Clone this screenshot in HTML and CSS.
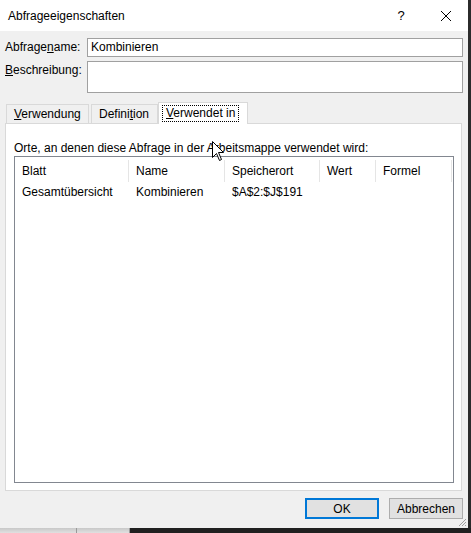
FILE: index.html
```html
<!DOCTYPE html>
<html>
<head>
  <title>Abfrageeigenschaften</title>
  <meta charset="UTF-8">
  <link rel="stylesheet" href="styles.css">
</head>
<body>
  <div class="dialog">
    <div class="titlebar">
      <span class="title">Abfrageeigenschaften</span>
      <span class="title-btn help">?</span>
      <span class="title-btn close">
        <svg width="12" height="12" viewBox="0 0 12 12"><path d="M1 1 L11 11 M11 1 L1 11" stroke="#000" stroke-width="1"/></svg>
      </span>
    </div>

    <div class="body">
      <div class="field-row">
        <label class="field-label">Abfrage<u>n</u>ame:</label>
        <div class="text-input">Kombinieren</div>
      </div>
      <div class="field-row">
        <label class="field-label"><u>B</u>eschreibung:</label>
        <div class="text-input multiline"></div>
      </div>

      <div class="tabs">
        <div class="tab"><u>V</u>erwendung</div>
        <div class="tab">Defini<u>t</u>ion</div>
        <div class="tab active"><span class="focus"><u>V</u>erwendet in</span></div>
      </div>

      <div class="tab-panel">
        <div class="panel-caption">Orte, an denen diese Abfrage in der Arbeitsmappe verwendet wird:</div>
        <div class="listview">
          <div class="lv-row lv-head">
            <div class="col c1">Blatt</div>
            <div class="col c2">Name</div>
            <div class="col c3">Speicherort</div>
            <div class="col c4">Wert</div>
            <div class="col c5">Formel</div>
          </div>
          <div class="lv-row">
            <div class="col c1">Gesamtübersicht</div>
            <div class="col c2">Kombinieren</div>
            <div class="col c3">$A$2:$J$191</div>
            <div class="col c4"></div>
            <div class="col c5"></div>
          </div>
        </div>
      </div>

      <div class="buttons">
        <button class="btn default">OK</button>
        <button class="btn">Abbrechen</button>
      </div>
    </div>

    <!-- size grip -->
    <svg class="grip" width="10" height="10" viewBox="0 0 10 10">
      <path d="M9 2 L2 9 M9 5 L5 9 M9 8 L8 9" stroke="#a0a0a0" stroke-width="1"/>
    </svg>
  </div>

  <div class="taskbar">
    <div class="tb-light"></div>
    <div class="tb-light second"></div>
    <div class="tb-dark"></div>
  </div>

  <!-- mouse pointer -->
  <svg class="cursor" width="13" height="21" viewBox="0 0 13 21">
    <path d="M0.5 0.5 L0.5 16.5 L4.5 12.5 L7.5 19.5 L9.5 18.5 L6.5 11.5 L11.5 11.5 Z" fill="#fff" stroke="#000" stroke-width="1" stroke-linejoin="miter"/>
  </svg>
</body>
</html>
```

FILE: styles.css
```css
:root {
  --face: #f0f0f0;
  --text: #000;
  --panel-border: #d9d9d9;
  --input-border: #a0a0a0;
  --list-border: #828790;
  --accent: #0078d7;
}

* {
  box-sizing: border-box;
  margin: 0;
  padding: 0;
}

body {
  width: 471px;
  height: 533px;
  background-color: #2b2b2b;
  font-family: 'Segoe UI', 'Liberation Sans', Arial, sans-serif;
  font-size: 12px;
  color: var(--text);
  overflow: hidden;
  position: relative;
}

u {
  text-decoration: underline;
  text-underline-offset: 1px;
}

.dialog {
  width: 468px;
  height: 528px;
  background-color: var(--face);
  position: relative;
  display: flex;
  flex-direction: column;
}

.titlebar {
  height: 31px;
  background-color: #fff;
  display: flex;
  align-items: center;
  padding-left: 8px;
}

.title {
  flex: 1;
  font-size: 12px;
}

.title-btn {
  width: 46px;
  height: 31px;
  display: flex;
  align-items: center;
  justify-content: center;
}

.help {
  font-size: 13px;
}

.close {
  width: 44px;
}

.body {
  flex: 1;
  padding: 7px 5px 0 5px;
  display: flex;
  flex-direction: column;
}

.field-row {
  display: flex;
  margin-bottom: 4px;
}

.field-label {
  width: 82px;
  padding-top: 2px;
}

.text-input {
  width: 376px;
  height: 19px;
  background-color: #fff;
  border: 1px solid var(--input-border);
  padding: 1px 3px;
  line-height: 15px;
}

.text-input.multiline {
  height: 32px;
}

.tabs {
  display: flex;
  align-items: flex-end;
  height: 22px;
  margin-top: 4px;
  padding-left: 1px;
}

.tab {
  height: 19px;
  padding: 2px 7px 0 7px;
  border: 1px solid var(--panel-border);
  border-bottom: none;
  margin-right: 2px;
  background-color: var(--face);
}

.tab:first-child {
  width: 83px;
}

.tab:nth-child(2) {
  width: 67px;
}

.tab.active {
  height: 22px;
  width: 90px;
  background-color: #fff;
  margin-left: -2px;
  margin-bottom: -1px;
  padding: 2px 3px 0 3px;
  position: relative;
  z-index: 1;
}

.focus {
  display: inline-block;
  border: 1px dotted #000;
  padding: 0 3px;
  line-height: 15px;
}

.tab-panel {
  width: 457px;
  height: 368px;
  background-color: #fff;
  border: 1px solid var(--panel-border);
  padding: 17px 0 0 8px;
}

.panel-caption {
  height: 15px;
  line-height: 14px;
}

.listview {
  width: 440px;
  height: 327px;
  border: 1px solid var(--list-border);
  background-color: #fff;
}

.lv-row {
  display: flex;
  height: 19px;
  line-height: 19px;
  padding-top: 1px;
}

.lv-head {
  height: 25px;
  line-height: 22px;
  padding-top: 3px;
}

.col {
  padding-left: 7px;
  white-space: nowrap;
}

.lv-head .col {
  border-right: 1px solid #e5e5e5;
}

.c1 { width: 114px; }
.c2 { width: 96px; }
.c3 { width: 95px; }
.c4 { width: 56px; }
.c5 { width: 76px; }

.buttons {
  display: flex;
  justify-content: flex-end;
  gap: 10px;
  margin-top: 7px;
}

.btn {
  width: 74px;
  height: 21px;
  font-family: inherit;
  font-size: 12px;
  background-color: #e1e1e1;
  border: 1px solid #adadad;
  color: #000;
}

.btn.default {
  border: 2px solid var(--accent);
}

.grip {
  position: absolute;
  right: 1px;
  bottom: 1px;
}

.taskbar {
  height: 5px;
  display: flex;
}

.tb-light {
  width: 77px;
  background: linear-gradient(#c8c8c8, #e0e0e0);
  border-right: 1px solid #999;
}

.tb-light.second {
  width: 53px;
}

.tb-dark {
  flex: 1;
  background-color: #202020;
}

.cursor {
  position: absolute;
  left: 212px;
  top: 141px;
}
```
